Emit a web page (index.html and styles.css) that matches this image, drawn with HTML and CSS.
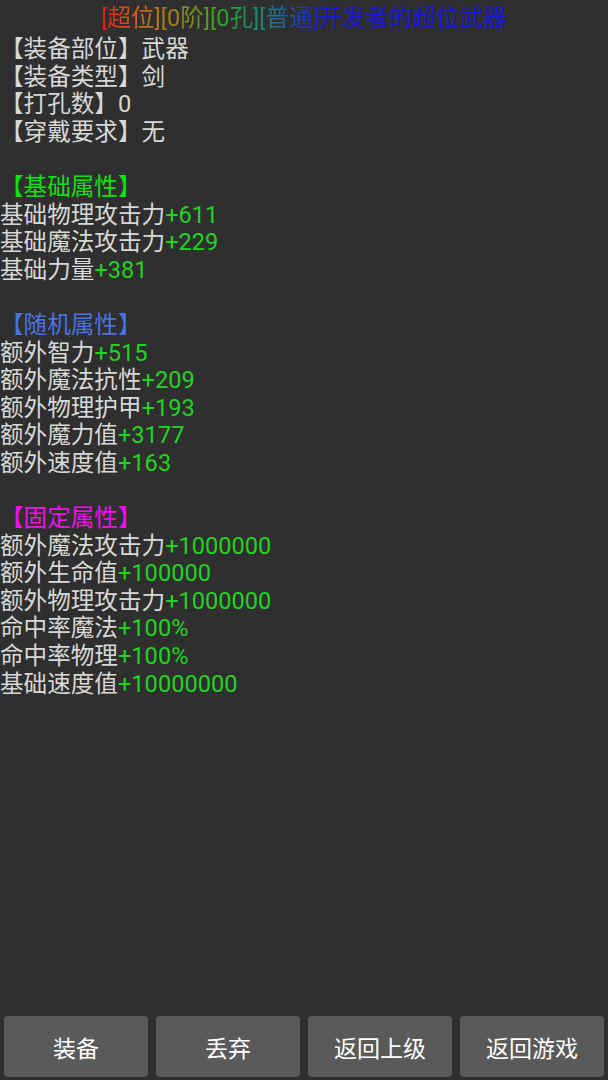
FILE: index.html
```html
<!DOCTYPE html>
<html lang="zh-CN">
<head>
<meta charset="utf-8">
<title>装备详情</title>
<link rel="stylesheet" href="styles.css">
</head>
<body>
<div class="page">
  <main class="content">
    <div class="title"><span class="grad">[超位][0阶][0孔][普通]</span><span class="blue">开发者的超位武器</span></div>
    <div class="lines">
      <div class="line">【装备部位】武器</div>
      <div class="line">【装备类型】剑</div>
      <div class="line">【打孔数】0</div>
      <div class="line">【穿戴要求】无</div>
      <div class="line blank"></div>
      <div class="line head-green">【基础属性】</div>
      <div class="line">基础物理攻击力<span class="num">+611</span></div>
      <div class="line">基础魔法攻击力<span class="num">+229</span></div>
      <div class="line">基础力量<span class="num">+381</span></div>
      <div class="line blank"></div>
      <div class="line head-blue">【随机属性】</div>
      <div class="line">额外智力<span class="num">+515</span></div>
      <div class="line">额外魔法抗性<span class="num">+209</span></div>
      <div class="line">额外物理护甲<span class="num">+193</span></div>
      <div class="line">额外魔力值<span class="num">+3177</span></div>
      <div class="line">额外速度值<span class="num">+163</span></div>
      <div class="line blank"></div>
      <div class="line head-magenta">【固定属性】</div>
      <div class="line">额外魔法攻击力<span class="num">+1000000</span></div>
      <div class="line">额外生命值<span class="num">+100000</span></div>
      <div class="line">额外物理攻击力<span class="num">+1000000</span></div>
      <div class="line">命中率魔法<span class="num">+100%</span></div>
      <div class="line">命中率物理<span class="num">+100%</span></div>
      <div class="line">基础速度值<span class="num">+10000000</span></div>
    </div>
  </main>
  <footer class="bar">
    <button class="btn">装备</button>
    <button class="btn">丢弃</button>
    <button class="btn">返回上级</button>
    <button class="btn">返回游戏</button>
  </footer>
</div>
</body>
</html>
```
FILE: styles.css
```css
html, body {
  margin: 0;
  padding: 0;
  background: #2f2f2f;
}
body {
  font-family: Roboto, "Noto Sans CJK SC", sans-serif;
  color: #d8d8d8;
}
.page {
  height: 1080px;
  display: flex;
  flex-direction: column;
}
.content {
  flex: 1;
}
.title {
  height: 35px;
  padding-top: 1px;
  line-height: 34px;
  font-size: 23.5px;
  text-align: center;
  white-space: nowrap;
}
.grad {
  background: linear-gradient(to right, #e81a1a 0%, #d2661a 18%, #8c8a18 38%, #22a82a 58%, #1f7a86 78%, #1a1ad8 100%);
  -webkit-background-clip: text;
  background-clip: text;
  color: transparent;
}
.blue {
  color: #1616d6;
}
.lines {
  font-size: 23.6px;
  line-height: 27.6px;
}
.line {
  height: 27.6px;
  white-space: nowrap;
}
.num {
  color: #22d322;
}
.head-green {
  color: #12e012;
}
.head-blue {
  color: #4a72e0;
}
.head-magenta {
  color: #f010f0;
}
.bar {
  display: flex;
  gap: 8px;
  padding: 0 4px 3px 4px;
}
.btn {
  flex: 1;
  height: 61px;
  border: none;
  border-radius: 4px;
  background: #5a5a5a;
  color: #ffffff;
  font-family: Roboto, "Noto Sans CJK SC", sans-serif;
  font-size: 23px;
  font-weight: 400;
  padding: 0;
}
```
